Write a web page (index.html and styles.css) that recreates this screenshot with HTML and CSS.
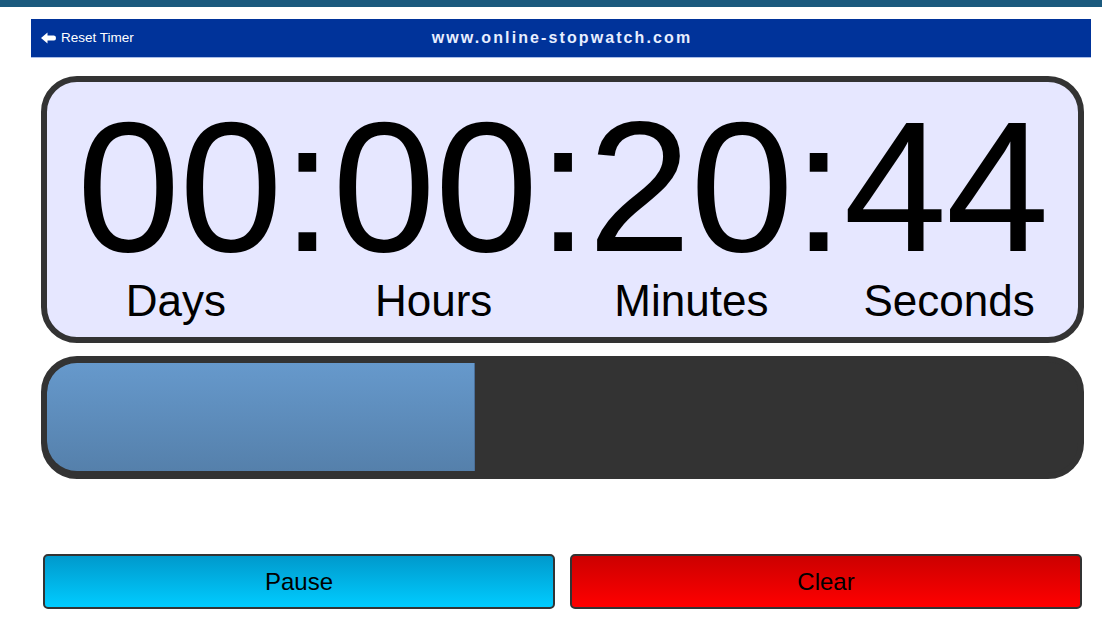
FILE: index.html
```html
<!DOCTYPE html>
<html lang="en">
<head>
    <meta charset="UTF-8">
    <title>Online Stopwatch - Countdown</title>
    <link rel="stylesheet" href="styles.css">
</head>
<body>
    <div class="topband"></div>
    <div class="header">
        <a class="reset" href="#">
            <svg width="15" height="12" viewBox="0 0 15 12"><path d="M0 6 L6.5 0.5 L6.5 3.5 L13 3.5 Q15 3.5 15 6 Q15 8.5 13 8.5 L6.5 8.5 L6.5 11.5 Z" fill="#fff"/></svg>
            Reset Timer
        </a>
        <div class="site">www.online-stopwatch.com</div>
    </div>

    <div class="clock">
        <div class="digits" id="digits">00:00:20:44</div>
        <div class="labels">
            <span>Days</span>
            <span>Hours</span>
            <span>Minutes</span>
            <span>Seconds</span>
        </div>
    </div>

    <div class="progress">
        <div class="fill" id="fill" style="width: 41.4%"></div>
    </div>

    <div class="controls">
        <button class="btn pause">Pause</button>
        <button class="btn clear">Clear</button>
    </div>
</body>
</html>
```

FILE: styles.css
```css
body {
    font-family: "Liberation Sans", Arial, sans-serif;
    background: #fff;
    margin: 0; padding: 0;
}
.topband {
    height: 7px;
    background: #1b5a7e;
}
.header {
    position: relative;
    margin: 12px 0 0 31px;
    width: 1060px;
    height: 38px;
    background: #00339a;
    border-bottom: 1px solid #a9bde8;
    display: flex;
    align-items: center;
    justify-content: center;
}
.reset {
    position: absolute;
    left: 10px;
    top: 11px;
    display: flex;
    align-items: center;
    gap: 5px;
    color: #fff;
    font-size: 13.5px;
    text-decoration: none;
}
.site {
    color: #e8eeff;
    font-weight: bold;
    font-size: 16px;
    letter-spacing: 2.1px;
    margin-left: 2px;
}
.clock {
    margin: 18px 0 0 41px;
    width: 1031px;
    border: 6px solid #333;
    border-radius: 36px;
    background: #e6e7ff;
    padding: 12px 0 14px;
}
.digits {
    font-size: 186px;
    line-height: 185px;
    text-align: center;
    color: #000;
    letter-spacing: -1px;
}
.labels {
    display: grid;
    grid-template-columns: repeat(4, 1fr);
    font-size: 44px;
    line-height: 44px;
    text-align: center;
}
.progress {
    margin: 13px 0 0 41px;
    width: 1031px;
    height: 111px;
    border: 6px solid #333;
    border-radius: 36px;
    background: #333;
    overflow: hidden;
}
.fill {
    height: 108px;
    margin-top: 1px;
    background: linear-gradient(#6699cc, #5580ab);
    border-radius: 30px 0 0 30px;
    border-right: 1px solid #4a6f99;
}
.controls {
    display: flex;
    gap: 15px;
    margin: 75px 0 0 43px;
    width: 1039px;
}
.btn {
    flex: 1;
    height: 55px;
    border: 2px solid #333;
    border-radius: 5px;
    font-family: "Liberation Sans", Arial, sans-serif;
    font-size: 24px;
    color: #000;
    cursor: pointer;
}
.pause {
    background: linear-gradient(#0099cc, #00ccff);
}
.clear {
    background: linear-gradient(#cc0000, #ff0000);
}
```
